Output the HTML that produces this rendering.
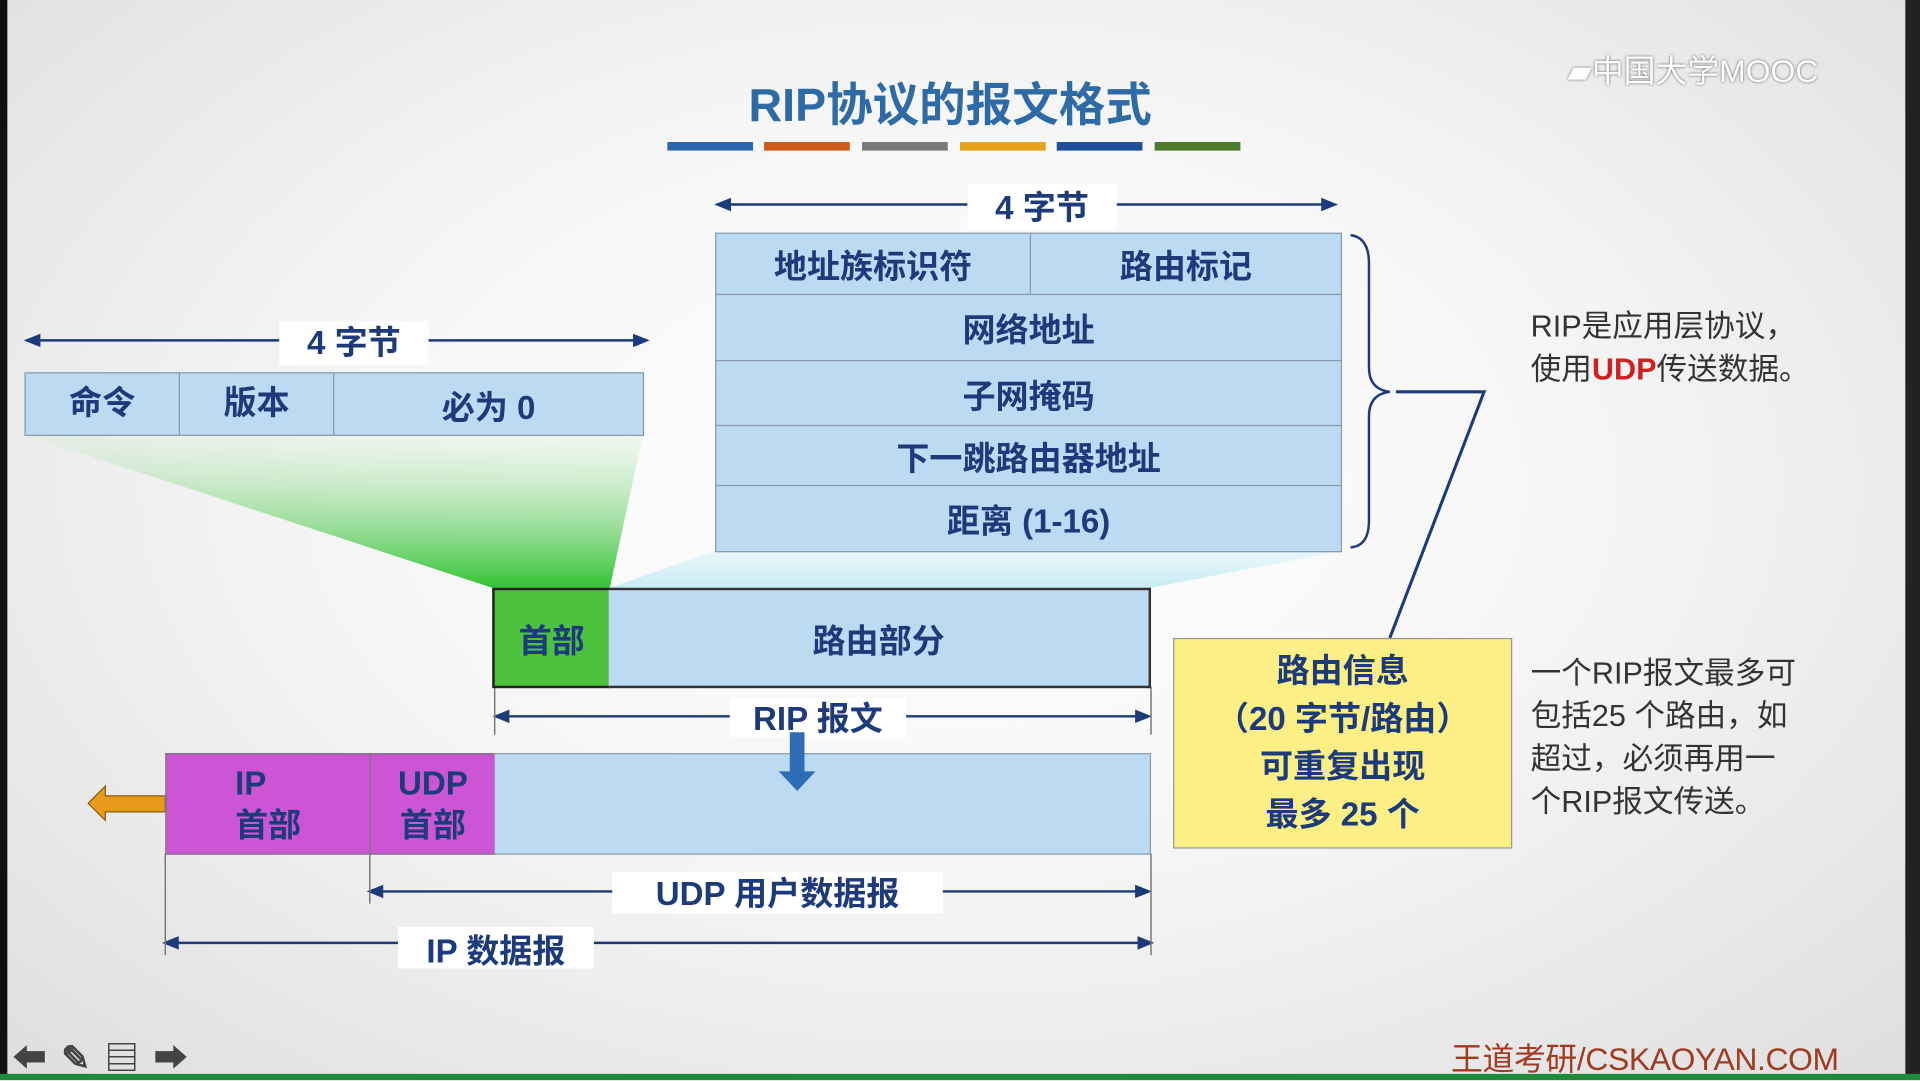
<!DOCTYPE html>
<html><head><meta charset="utf-8"><style>
html,body{margin:0;padding:0;width:1920px;height:1080px;overflow:hidden;background:#e4e4e4}
#s{position:absolute;left:0;top:0;width:1568px;height:882px;transform:scale(1.22449);transform-origin:0 0;
background:radial-gradient(ellipse at 50% 45%,#ffffff 0%,#f6f6f6 45%,#dedede 100%);
font-family:"Liberation Sans","Noto Sans CJK SC",sans-serif;font-weight:bold;color:#1d3a7a}
.a{position:absolute}
.c{position:absolute;display:flex;align-items:center;justify-content:center;box-sizing:border-box;font-size:27px}
.bl{background:#bcdaf2;border:1.5px solid #8a9aa8}
.lab{position:absolute;background:#fff;font-size:27px;text-align:center}
.t{position:absolute;font-weight:normal;color:#333;font-size:25px;line-height:35px}
</style></head><body><div id="s">
<div class="a" style="left:0;top:0;width:6px;height:882px;background:#111"></div>
<div class="a" style="left:1556px;top:0;width:12px;height:882px;background:#222"></div>
<div class="a" style="left:0;top:877px;width:1568px;height:5px;background:#1f8a3a"></div>
<div class="a" style="width:1568px;text-align:center;top:55px;font-size:38px;color:#2e6aa5;left:-8px">RIP协议的报文格式</div>
<div class="a" style="left:545px;top:116px;width:70px;height:7px;background:#2d66ab"></div>
<div class="a" style="left:624px;top:116px;width:70px;height:7px;background:#d0581a"></div>
<div class="a" style="left:704px;top:116px;width:70px;height:7px;background:#7a7a7a"></div>
<div class="a" style="left:784px;top:116px;width:70px;height:7px;background:#e8a21a"></div>
<div class="a" style="left:863px;top:116px;width:70px;height:7px;background:#1f4f98"></div>
<div class="a" style="left:943px;top:116px;width:70px;height:7px;background:#4a7a2a"></div>
<div class="a" style="left:1280px;top:38px;font-size:26px;color:#fff;font-weight:normal;text-shadow:0 0 2px #555">▰中国大学MOOC</div>

<svg class="a" style="left:0;top:0" width="1568" height="882">
<defs><linearGradient id="g" x1="0" y1="0" x2="0" y2="1"><stop offset="0" stop-color="#d8f0d8" stop-opacity=".3"/><stop offset="1" stop-color="#33c233"/></linearGradient>
<linearGradient id="g2" x1="0" y1="0" x2="0" y2="1"><stop offset="0" stop-color="#e9f7fb"/><stop offset="1" stop-color="#c8ecf4"/></linearGradient></defs>
<polygon points="20,355 525,355 498,480 402,480" fill="url(#g)"/>
<polygon points="584,450 1095,450 940,480 498,480" fill="url(#g2)"/>
<g stroke="#1d3a7a" stroke-width="2" fill="#1d3a7a">
<line x1="24" y1="278" x2="526" y2="278"/><polygon points="22,278 32,274 32,282"/><polygon points="528,278 518,274 518,282"/>
<line x1="588" y1="167" x2="1088" y2="167"/><polygon points="586,167 596,163 596,171"/><polygon points="1090,167 1080,163 1080,171"/>
<line x1="407" y1="585" x2="936" y2="585"/><polygon points="405,585 415,581 415,589"/><polygon points="938,585 928,581 928,589"/>
<line x1="304" y1="728" x2="936" y2="728"/><polygon points="302,728 312,724 312,732"/><polygon points="938,728 928,724 928,732"/>
<line x1="137" y1="770" x2="938" y2="770"/><polygon points="135,770 145,766 145,774"/><polygon points="940,770 930,766 930,774"/>
</g>
<g stroke="#777" stroke-width="1.2">
<line x1="404" y1="561" x2="404" y2="600"/><line x1="940" y1="561" x2="940" y2="600"/>
<line x1="302" y1="697" x2="302" y2="738"/><line x1="940" y1="697" x2="940" y2="780"/>
<line x1="135" y1="697" x2="135" y2="780"/></g>
<path d="M1103,192 Q1118,194 1118,215 L1118,300 Q1118,318 1135,320 Q1118,322 1118,340 L1118,425 Q1118,446 1103,447" fill="none" stroke="#1d3a7a" stroke-width="2"/>
<polyline points="1140,320 1212,320 1135,521" fill="none" stroke="#1d3a7a" stroke-width="2.5"/>
<polygon points="72,656 86,642 86,650 135,650 135,663 86,663 86,670" fill="#e89a1a" stroke="#8a5a10" stroke-width="1"/>
</svg>

<div class="lab" style="left:228px;top:262px;width:122px;height:36px;line-height:36px">4 字节</div>
<div class="lab" style="left:790px;top:150px;width:122px;height:38px;line-height:40px">4 字节</div>
<div class="lab" style="left:596px;top:570px;width:144px;height:32px;line-height:34px;background:#fff">RIP 报文</div>
<div class="lab" style="left:500px;top:712px;width:270px;height:34px;line-height:36px">UDP 用户数据报</div>
<div class="lab" style="left:325px;top:757px;width:160px;height:34px;line-height:40px">IP 数据报</div>

<div class="c bl" style="left:20px;top:304px;width:127px;height:52px;align-items:flex-start;padding-top:2px">命令</div>
<div class="c bl" style="left:146px;top:304px;width:127px;height:52px;align-items:flex-start;padding-top:2px">版本</div>
<div class="c bl" style="left:272px;top:304px;width:254px;height:52px">必为 0</div>

<div class="c bl" style="left:584px;top:190px;width:258px;height:51px">地址族标识符</div>
<div class="c bl" style="left:841px;top:190px;width:255px;height:51px">路由标记</div>
<div class="c bl" style="left:584px;top:240px;width:512px;height:55px">网络地址</div>
<div class="c bl" style="left:584px;top:294px;width:512px;height:54px">子网掩码</div>
<div class="c bl" style="left:584px;top:347px;width:512px;height:50px">下一跳路由器地址</div>
<div class="c bl" style="left:584px;top:396px;width:512px;height:55px">距离 (1-16)</div>

<div class="c" style="left:402px;top:480px;width:97px;height:82px;background:#4cc23e;border:2px solid #222">首部</div>
<div class="c bl" style="left:497px;top:480px;width:443px;height:82px;border:2px solid #333;border-left:none">路由部分</div>

<div class="c" style="left:135px;top:615px;width:168px;height:83px;background:#cc55d6;border:1.5px solid #777;flex-direction:column;line-height:34px">IP<br>首部</div>
<div class="c" style="left:302px;top:615px;width:103px;height:83px;background:#cc55d6;border:1.5px solid #777;line-height:34px;text-align:center">UDP<br>首部</div>
<div class="c bl" style="left:404px;top:615px;width:536px;height:83px;border-left:none"></div>

<svg class="a" style="left:0;top:0" width="1568" height="882">
<polygon points="645,598 657,598 657,630 666,630 651,646 636,630 645,630" fill="#2e6cb5"/>
</svg>

<div class="c" style="left:958px;top:521px;width:277px;height:172px;background:#fbef86;border:1.5px solid #999;text-align:center;line-height:39px">路由信息<br>（20 字节/路由）<br>可重复出现<br>最多 25 个</div>

<div class="t" style="left:1250px;top:250px">RIP是应用层协议，<br>使用<span style="color:#d02020;font-weight:bold">UDP</span>传送数据。</div>
<div class="t" style="left:1250px;top:533px">一个RIP报文最多可<br>包括25 个路由，如<br>超过，必须再用一<br>个RIP报文传送。</div>

<div class="a" style="left:10px;top:843px;font-size:28px;color:#444;letter-spacing:12px">⬅✎▤➡</div>
<div class="a" style="left:1185px;top:845px;font-size:26px;color:#a03a20;font-weight:normal;letter-spacing:-0.3px">王道考研/CSKAOYAN.COM</div>
</div></body></html>
